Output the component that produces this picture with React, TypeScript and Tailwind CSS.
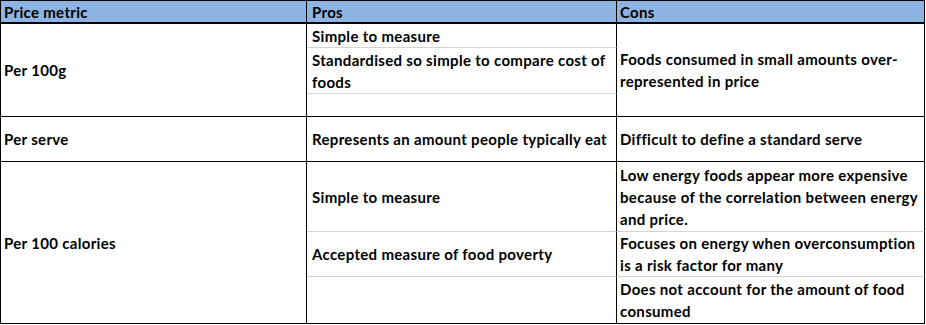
import React from "react";

const font = { fontFamily: "Lato, 'Open Sans', sans-serif" };

export default function App() {
  const txt = "text-[15px] font-bold leading-[22px] tracking-[0.32px] text-black whitespace-nowrap";
  return (
    <div className="bg-white w-[926px] h-[325px]">
      <div
        className="grid grid-cols-[306px_310px_308px] grid-rows-[23px_24px_46px_23px_45px_70px_45px_47px] border-l border-t border-black w-[925px]"
        style={font}
      >
        {/* header */}
        <div className={`bg-[#8db4e2] border-b-2 border-r border-black flex items-center pl-[3px] ${txt}`}>Price metric</div>
        <div className={`bg-[#8db4e2] border-b-2 border-r border-black flex items-center pl-[5px] ${txt}`}>Pros</div>
        <div className={`bg-[#8db4e2] border-b-2 border-r border-black flex items-center pl-[3px] ${txt}`}>Cons</div>

        {/* group 1 */}
        <div className={`row-start-2 row-span-3 col-start-1 border-b border-r border-black flex items-center pl-[3px] ${txt}`}>Per 100g</div>
        <div className={`row-start-2 col-start-2 border-b border-b-[#d4d4d4] border-r border-r-black flex items-center pl-[5px] ${txt}`}>Simple to measure</div>
        <div className={`row-start-3 col-start-2 border-b border-b-[#d4d4d4] border-r border-r-black flex flex-col justify-center pl-[5px] ${txt}`}>
          <span>Standardised so simple to compare cost of</span>
          <span>foods</span>
        </div>
        <div className="row-start-4 col-start-2 border-b border-r border-black" />
        <div className={`row-start-2 row-span-3 col-start-3 border-b border-r border-black flex flex-col justify-center pl-[3px] ${txt}`}>
          <span>Foods consumed in small amounts over-</span>
          <span>represented in price</span>
        </div>

        {/* group 2 */}
        <div className={`row-start-5 col-start-1 border-b border-r border-black flex items-center pl-[3px] ${txt}`}>Per serve</div>
        <div className={`row-start-5 col-start-2 border-b border-r border-black flex items-center pl-[5px] ${txt}`}>Represents an amount people typically eat</div>
        <div className={`row-start-5 col-start-3 border-b border-r border-black flex items-center pl-[3px] ${txt}`}>Difficult to define a standard serve</div>

        {/* group 3 */}
        <div className={`row-start-6 row-span-3 col-start-1 border-b border-r border-black flex items-center pl-[3px] ${txt}`}>Per 100 calories</div>
        <div className={`row-start-6 col-start-2 border-b border-b-[#d4d4d4] border-r border-r-black flex items-center pl-[5px] ${txt}`}>Simple to measure</div>
        <div className={`row-start-7 col-start-2 border-b border-b-[#d4d4d4] border-r border-r-black flex items-center pl-[5px] ${txt}`}>Accepted measure of food poverty</div>
        <div className="row-start-8 col-start-2 border-b border-r border-black" />
        <div className={`row-start-6 col-start-3 border-b border-b-[#d4d4d4] border-r border-r-black flex flex-col justify-center pl-[3px] ${txt}`}>
          <span>Low energy foods appear more expensive</span>
          <span>because of the correlation between energy</span>
          <span>and price.</span>
        </div>
        <div className={`row-start-7 col-start-3 border-b border-b-[#d4d4d4] border-r border-r-black flex flex-col justify-center pl-[3px] ${txt}`}>
          <span>Focuses on energy when overconsumption</span>
          <span>is a risk factor for many</span>
        </div>
        <div className={`row-start-8 col-start-3 border-b border-r border-black flex flex-col justify-center pl-[3px] ${txt}`}>
          <span>Does not account for the amount of food</span>
          <span>consumed</span>
        </div>
      </div>
    </div>
  );
}
